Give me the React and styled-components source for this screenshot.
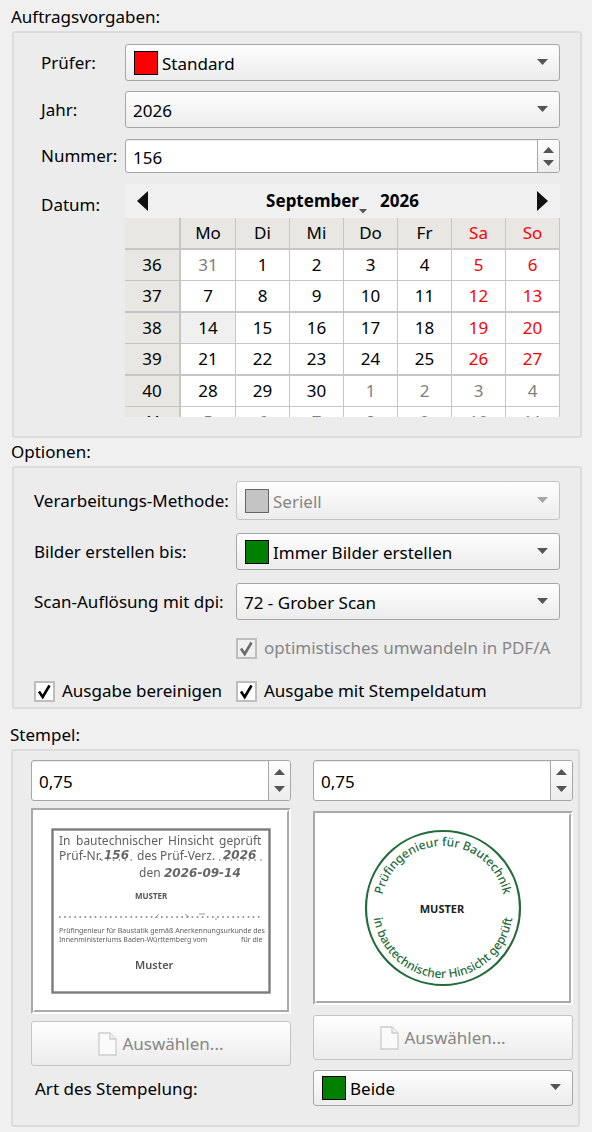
import { useState } from 'react';
import styled, { createGlobalStyle, css } from 'styled-components';


const GlobalStyle = createGlobalStyle`
    * {
        box-sizing: border-box;
    }
    body {
        margin: 0;
        background: #f0f0f0;
        color: #000;
        font-family: "Noto Sans", "Open Sans", sans-serif;
        font-size: 17px;
    }
    button, input, select {
        font: inherit;
        color: inherit;
        margin: 0;
    }
`;

const raised = css`
    background: linear-gradient(#fefefe, #ececec);
    border: 1px solid ${({ disabled }) => (disabled ? '#c4c4c4' : '#a6a6a6')};
    border-radius: 3px;
`;

const Page = styled.main`
    padding-top: 4px;
`;

const Section = styled.section`
    padding: ${({ $inset }) => $inset || '0 10px 0 12px'};
    margin-bottom: ${({ $space }) => $space || 0}px;
`;

const Title = styled.h2`
    margin: 0 0 1px -1px;
    font-size: 17px;
    font-weight: 400;
    line-height: 26px;
`;

const Group = styled.div`
    background: #ececec;
    border: 2px solid #dcdcdc;
    border-radius: 3px;
`;

const JobGrid = styled(Group)`
    display: grid;
    grid-template-columns: 84px minmax(0, 1fr);
    grid-template-rows: 37px 37px 36px auto;
    row-gap: 10px;
    align-items: center;
    padding: 11px 20px 19px 27px;
`;

const OptionGrid = styled(Group)`
    display: grid;
    grid-template-columns: 202px minmax(0, 1fr);
    grid-template-rows: 39px 37px 37px 30px 30px;
    row-gap: 13px;
    align-items: center;
    padding: 13px 20px 1px;
`;

const StampGrid = styled(Group)`
    display: grid;
    grid-template-columns: minmax(0, 1fr) minmax(0, 1fr);
    column-gap: 22px;
    padding: 9px 5px 19px 18px;
`;

const StampColumn = styled.div`
    display: flex;
    flex-direction: column;
    gap: ${({ $gap }) => $gap}px;
`;

const Label = styled.label`
    white-space: nowrap;
    line-height: 26px;
`;

const DateLabel = styled.span`
    align-self: start;
    padding-top: 8px;
    line-height: 26px;
`;

const StampLabel = styled(Label)`
    padding: 3px 4px;
`;

const SelectBox = styled.div`
    position: relative;
    height: ${({ $height }) => $height || 37}px;

    > svg {
        position: absolute;
        right: 12px;
        top: 50%;
        margin-top: -4px;
        pointer-events: none;
    }
`;

const NativeSelect = styled.select`
    ${raised}
    appearance: none;
    display: block;
    width: 100%;
    height: 100%;
    padding: 1px 30px 0 ${({ $swatch }) => ($swatch ? 36 : 7)}px;
    opacity: 1;
    color: ${({ disabled }) => (disabled ? '#868686' : '#000')};
`;

const Swatch = styled.span`
    position: absolute;
    left: 9px;
    top: 50%;
    width: 24px;
    height: 24px;
    margin-top: -12px;
    background: ${({ $color }) => $color};
    border: 1px solid ${({ $edge }) => $edge || '#000'};
    pointer-events: none;
`;

const SpinFrame = styled.div`
    display: flex;
    height: ${({ $height }) => $height}px;
    border: 1px solid #a6a6a6;
    border-radius: 3px;
    background: #fff;
    box-shadow: inset 0 1px #ececec;
    overflow: hidden;
`;

const SpinInput = styled.input`
    flex: 1;
    min-width: 0;
    padding: 2px 7px 0;
    border: 0;
    background: transparent;
    outline: none;
`;

const SpinButtons = styled.div`
    display: flex;
    flex-direction: column;
    width: 22px;
    padding: 3px 0;
    border-left: 1px solid #a6a6a6;
    background: linear-gradient(#fefefe, #ececec);
`;

const SpinButton = styled.button`
    flex: 1;
    display: flex;
    align-items: center;
    justify-content: center;
    min-height: 0;
    padding: 0;
    border: 0;
    background: none;
`;

const Calendar = styled.div`
    height: 233px;
    overflow: hidden;
    background: #f0f0f0;
`;

const CalendarBar = styled.div`
    display: flex;
    align-items: center;
    justify-content: space-between;
    height: 34px;
    padding: 0 12px;
`;

const BarButton = styled.button`
    display: flex;
    align-items: flex-end;
    padding: 0;
    border: 0;
    background: none;
    font-weight: 700;
    line-height: 26px;
`;

const MonthYear = styled.div`
    display: flex;
    gap: 13px;
`;

const Days = styled.table`
    width: 100%;
    table-layout: fixed;
    border-collapse: separate;
    border-spacing: 0;
    line-height: 26px;

    th, td {
        padding: 0;
        font-weight: 400;
        text-align: center;
        border: 0 solid #c6c6c6;
        border-right-width: 1px;
        border-bottom-width: 1px;
    }
    th {
        background: #e8e7e3;
    }
    tr {
        height: 31px;
    }
    tr:nth-child(even), thead tr {
        height: 32px;
    }
    tr:nth-child(even) > *, thead th {
        border-bottom-width: 2px;
    }
    tr > th:first-child {
        width: 56px;
        border-right-width: 2px;
    }
    thead th:nth-child(2) {
        width: 55px;
    }
`;

const dayColor = ({ $other, $weekend }) => {
    if ($other) return '#808080';
    return $weekend ? '#ff0000' : '#000';
};

const HeadCell = styled.th`
    color: ${dayColor};
`;

const DayCell = styled.td`
    color: ${dayColor};
    background: ${({ $selected }) => ($selected ? '#f0f0f0' : '#fff')};
`;

const CheckLabel = styled.label`
    display: flex;
    align-items: center;
    gap: 7px;
    white-space: nowrap;
    line-height: 26px;
    color: ${({ $disabled }) => ($disabled ? '#868686' : '#000')};
`;

const CheckBox = styled.span`
    position: relative;
    width: 21px;
    height: 21px;

    svg {
        position: absolute;
        inset: 0;
        pointer-events: none;
    }
`;

const CheckInput = styled.input`
    appearance: none;
    display: block;
    width: 21px;
    height: 21px;
    border: 2px solid #bebebe;
    background: ${({ disabled }) => (disabled ? '#f0f0f0' : '#fff')};
`;

const Preview = styled.div`
    height: ${({ $height }) => $height}px;
    border: 2px solid;
    border-color: #a9a9a9 #fff #fff #a9a9a9;
`;

const PreviewInner = styled.div`
    display: flex;
    align-items: center;
    justify-content: center;
    height: 100%;
    border: 2px solid;
    border-color: #fff #a9a9a9 #a9a9a9 #fff;
    background: #fff;
`;

const PickButton = styled.button`
    ${raised}
    display: flex;
    align-items: center;
    justify-content: center;
    gap: 5px;
    height: 45px;
    color: #868686;
`;

const Triangle = ({ up, color = '#555' }) => (
    <svg width="11" height="6" viewBox="0 0 11 6">
        <path d={up ? 'M0 6 L5.5 0 L11 6 Z' : 'M0 0 H11 L5.5 6 Z'} fill={color} />
    </svg>
);

const Select = ({ id, value, swatch, edge, disabled, height }) => (
    <SelectBox $height={height}>
        <NativeSelect id={id} disabled={disabled} $swatch={swatch} defaultValue={value}>
            <option>{value}</option>
        </NativeSelect>
        {swatch && <Swatch $color={swatch} $edge={edge} />}
        <Triangle color={disabled ? '#a6a6a6' : '#555'} />
    </SelectBox>
);

const SpinBox = ({ id, start, step, digits, height, label }) => {
    const [value, setValue] = useState(start);
    const change = (by) => {
        const next = Number(value.replace(',', '.')) + by;
        setValue(next.toFixed(digits).replace('.', ','));
    };

    return (
        <SpinFrame $height={height}>
            <SpinInput id={id} aria-label={label} value={value} onChange={(e) => setValue(e.target.value)} />
            <SpinButtons>
                <SpinButton type="button" aria-label="+" onClick={() => change(step)}><Triangle up /></SpinButton>
                <SpinButton type="button" aria-label="-" onClick={() => change(-step)}><Triangle /></SpinButton>
            </SpinButtons>
        </SpinFrame>
    );
};

const Check = ({ text, disabled }) => {
    const [checked, setChecked] = useState(true);

    return (
        <CheckLabel $disabled={disabled}>
            <CheckBox>
                <CheckInput
                    type="checkbox"
                    checked={checked}
                    disabled={disabled}
                    onChange={() => setChecked(!checked)}
                />
                {checked && (
                    <svg width="21" height="21" viewBox="0 0 21 21">
                        <path
                            d="M5 10.5 L8.7 16 L15.5 4.5"
                            fill="none"
                            stroke={disabled ? '#6a6a6a' : '#000'}
                            strokeWidth="2.6"
                        />
                    </svg>
                )}
            </CheckBox>
            {text}
        </CheckLabel>
    );
};

const FileIcon = () => (
    <svg width="19" height="24" viewBox="0 0 19 24">
        <path d="M1 1 H12 L18 7 V23 H1 Z" fill="#fafafa" stroke="#cdcdcd" strokeWidth="1.3" />
        <path d="M12 1 V7 H18" fill="#f2f2f2" stroke="#cdcdcd" strokeWidth="1.3" />
    </svg>
);

const weekdays = ['Mo', 'Di', 'Mi', 'Do', 'Fr', 'Sa', 'So'];

const weeks = [
    { number: 36, days: [31, 1, 2, 3, 4, 5, 6] },
    { number: 37, days: [7, 8, 9, 10, 11, 12, 13] },
    { number: 38, days: [14, 15, 16, 17, 18, 19, 20] },
    { number: 39, days: [21, 22, 23, 24, 25, 26, 27] },
    { number: 40, days: [28, 29, 30, 1, 2, 3, 4] },
    { number: 41, days: [5, 6, 7, 8, 9, 10, 11] },
];

const isOther = (week, day) => (week === 36 && day > 20) || (week === 40 && day < 20) || week === 41;

const MonthCalendar = () => {
    const [selected, setSelected] = useState('38-14');

    return (
        <Calendar>
            <CalendarBar>
                <BarButton type="button" aria-label="Vorheriger Monat">
                    <svg width="11" height="20" viewBox="0 0 11 20"><path d="M11 0 V20 L0 10 Z" fill="#111" /></svg>
                </BarButton>
                <MonthYear>
                    <BarButton type="button">
                        September
                        <svg width="8" height="5" viewBox="0 0 8 5"><path d="M0 0 H8 L4 4.5 Z" fill="#555" /></svg>
                    </BarButton>
                    <BarButton type="button">2026</BarButton>
                </MonthYear>
                <BarButton type="button" aria-label="Nächster Monat">
                    <svg width="11" height="20" viewBox="0 0 11 20"><path d="M0 0 V20 L11 10 Z" fill="#111" /></svg>
                </BarButton>
            </CalendarBar>
            <Days>
                <thead>
                    <tr>
                        <HeadCell />
                        {weekdays.map((name, i) => (
                            <HeadCell key={name} $weekend={i > 4}>{name}</HeadCell>
                        ))}
                    </tr>
                </thead>
                <tbody>
                    {weeks.map(({ number, days }) => (
                        <tr key={number}>
                            <th>{number}</th>
                            {days.map((day, i) => (
                                <DayCell
                                    key={day}
                                    $other={isOther(number, day)}
                                    $weekend={i > 4}
                                    $selected={selected === `${number}-${day}`}
                                    onClick={() => setSelected(`${number}-${day}`)}
                                >
                                    {day}
                                </DayCell>
                            ))}
                        </tr>
                    ))}
                </tbody>
            </Days>
        </Calendar>
    );
};

const StampText = styled.text`
    font-size: ${({ $size }) => $size || 12}px;
    font-weight: ${({ $weight }) => $weight || 400};
    fill: ${({ $fill }) => $fill || '#606060'};
`;

// the filled-in values are set in a wide slanted face
const StampEntry = styled.text`
    font: italic 700 12px "DejaVu Sans", sans-serif;
    fill: #666;
`;

const SquareStamp = () => (
    <svg width="220" height="166" viewBox="0 0 220 166">
        <defs>
            <filter id="soft"><feGaussianBlur stdDeviation="0.5" /></filter>
        </defs>
        <rect x="1.5" y="1.5" width="217" height="163" fill="#fff" stroke="#7c7c7c" strokeWidth="2.4" />
        <g filter="url(#soft)">
            <StampText y="17">
                <tspan x="8">In</tspan>
                <tspan x="25">bautechnischer</tspan>
                <tspan x="117">Hinsicht</tspan>
                <tspan x="168">geprüft</tspan>
            </StampText>
            <StampText y="32">
                <tspan x="8">Prüf-Nr.</tspan>
                <tspan x="86">des Prüf-Verz.</tspan>
            </StampText>
            <StampEntry x="53" y="31">156</StampEntry>
            <StampEntry x="172" y="31">2026</StampEntry>
            <path d="M50 32 H84 M168 32 H213" stroke="#888" strokeWidth="1.4" strokeDasharray="1.4 4.5" />
            <StampText x="88" y="49">den</StampText>
            <StampEntry x="113" y="49">2026-09-14</StampEntry>
            <StampText x="84" y="71" $size={8} $weight={700} $fill="#555">MUSTER</StampText>
            <path d="M8 89 H212" stroke="#777" strokeWidth="1.6" strokeDasharray="1.6 3.5" />
            <path d="M104 90 L108 86 M134 86 l4 3 M148 86 h6 M165 90 v2" stroke="#999" strokeWidth="1" />
            <StampText x="8" y="105" $size={7}>Prüfingenieur für Baustatik gemäß Anerkennungsurkunde des</StampText>
            <StampText y="114" $size={7}>
                <tspan x="8">Innenministeriums Baden-Württemberg vom</tspan>
                <tspan x="190">für die</tspan>
            </StampText>
            <StampText x="84" y="141" $size={11} $weight={600} $fill="#555">Muster</StampText>
        </g>
    </svg>
);

const RoundStamp = () => (
    <svg width="158" height="158" viewBox="0 0 158 158">
        <defs>
            <path id="upper" d="M17 79 A62 62 0 0 1 141 79" />
            <path id="lower" d="M9 79 A70 70 0 0 0 149 79" />
        </defs>
        <circle cx="79" cy="79" r="77" fill="#fff" stroke="#246b3c" strokeWidth="2.2" />
        <StampText $fill="#246b3c" $weight={500} textAnchor="middle">
            <textPath href="#upper" startOffset="50%">Prüfingenieur für Bautechnik</textPath>
        </StampText>
        <StampText $fill="#246b3c" $weight={500} textAnchor="middle">
            <textPath href="#lower" startOffset="50%">in bautechnischer Hinsicht geprüft</textPath>
        </StampText>
        <StampText x="78" y="84" $size={11} $weight={700} $fill="#222" textAnchor="middle">MUSTER</StampText>
    </svg>
);

const StampPreview = ({ height, children }) => (
    <Preview $height={height}>
        <PreviewInner>{children}</PreviewInner>
    </Preview>
);

const App = () => {
    return (
        <Page>
            <GlobalStyle />
            <Section $space={1}>
                <Title>Auftragsvorgaben:</Title>
                <JobGrid>
                    <Label htmlFor="pruefer">Prüfer:</Label>
                    <Select id="pruefer" value="Standard" swatch="#ff0000" />
                    <Label htmlFor="jahr">Jahr:</Label>
                    <Select id="jahr" value="2026" />
                    <Label htmlFor="nummer">Nummer:</Label>
                    <SpinBox id="nummer" start="156" step={1} digits={0} height={34} />
                    <DateLabel>Datum:</DateLabel>
                    <MonthCalendar />
                </JobGrid>
            </Section>

            <Section $space={13}>
                <Title>Optionen:</Title>
                <OptionGrid>
                    <Label htmlFor="methode">Verarbeitungs-Methode:</Label>
                    <Select id="methode" value="Seriell" swatch="#c4c4c4" edge="#666" height={39} disabled />
                    <Label htmlFor="bilder">Bilder erstellen bis:</Label>
                    <Select id="bilder" value="Immer Bilder erstellen" swatch="#008000" />
                    <Label htmlFor="dpi">Scan-Auflösung mit dpi:</Label>
                    <Select id="dpi" value="72 - Grober Scan" />
                    <span />
                    <Check text="optimistisches umwandeln in PDF/A" disabled />
                    <Check text="Ausgabe bereinigen" />
                    <Check text="Ausgabe mit Stempeldatum" />
                </OptionGrid>
            </Section>

            <Section $inset="0 12px 0 11px">
                <Title>Stempel:</Title>
                <StampGrid>
                    <StampColumn $gap={7}>
                        <SpinBox start="0,75" step={0.05} digits={2} height={41} label="Skalierung Textstempel" />
                        <StampPreview height={206}><SquareStamp /></StampPreview>
                        <PickButton type="button" disabled><FileIcon />Auswählen...</PickButton>
                        <StampLabel htmlFor="art">Art des Stempelung:</StampLabel>
                    </StampColumn>
                    <StampColumn $gap={10}>
                        <SpinBox start="0,75" step={0.05} digits={2} height={41} label="Skalierung Rundstempel" />
                        <StampPreview height={194}><RoundStamp /></StampPreview>
                        <PickButton type="button" disabled><FileIcon />Auswählen...</PickButton>
                        <Select id="art" value="Beide" swatch="#008000" height={36} />
                    </StampColumn>
                </StampGrid>
            </Section>
        </Page>
    );
};

export default App;
